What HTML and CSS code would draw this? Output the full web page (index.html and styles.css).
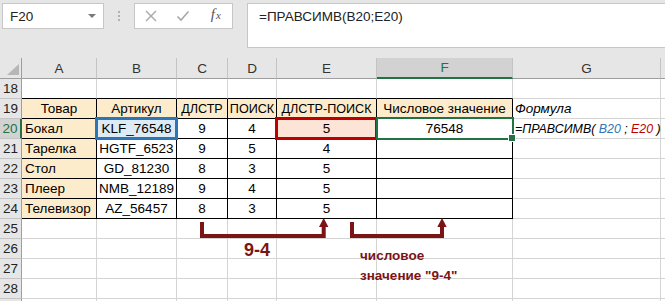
FILE: index.html
```html
<!DOCTYPE html>
<html lang="ru">
<head>
<meta charset="utf-8">
<title>ПРАВСИМВ</title>
<link rel="stylesheet" href="styles.css">
</head>
<body>
<div class="app">
  <div class="fbar">
    <div class="namebox"><span>F20</span><span class="caret"></span></div>
    <div class="grip"><i></i><i></i><i></i></div>
    <div class="btns">
      <span class="btn"><svg width="12" height="12" viewBox="0 0 12 12"><path d="M1 1L11 11M11 1L1 11" stroke="#a8a8a8" stroke-width="1.4" fill="none"/></svg></span>
      <span class="btn"><svg width="14" height="12" viewBox="0 0 14 12"><path d="M1.5 6.5L5 10L12.5 1.5" stroke="#a8a8a8" stroke-width="1.6" fill="none"/></svg></span>
      <span class="btn fx"><span class="f">f</span><span class="x">x</span></span>
    </div>
    <div class="formula">=ПРАВСИМВ(B20;E20)</div>
  </div>

  <div class="sheet">
    <div class="c corner"><span class="tri"></span></div>
    <div class="c ch">A</div><div class="c ch">B</div><div class="c ch">C</div><div class="c ch">D</div><div class="c ch">E</div><div class="c ch act">F</div><div class="c ch">G</div><div class="c ch"></div>

    <div class="c rh">18</div>
    <div class="c tb"></div><div class="c tb"></div><div class="c tb"></div><div class="c tb"></div><div class="c tb"></div><div class="c tb"></div><div class="c"></div><div class="c"></div>

    <div class="c rh">19</div>
    <div class="c t cream ctr">Товар</div><div class="c t cream ctr">Артикул</div><div class="c t cream ctr caps">ДЛСТР</div><div class="c t cream ctr caps">ПОИСК</div><div class="c t cream ctr caps">ДЛСТР-ПОИСК</div><div class="c t cream ctr">Числовое значение</div><div class="c it ov">Формула</div><div class="c"></div>

    <div class="c rh act">20</div>
    <div class="c t cream">Бокал</div><div class="c t ctr selb">KLF_76548</div><div class="c t ctr">9</div><div class="c t ctr">4</div><div class="c t ctr selr">5</div><div class="c t ctr active">76548</div><div class="c it ov fm"><span>=ПРАВСИМВ( <span class="blue">B20</span> ; <span class="red">E20</span> )</span></div><div class="c"></div>

    <div class="c rh">21</div>
    <div class="c t cream">Тарелка</div><div class="c t ctr">HGTF_6523</div><div class="c t ctr">9</div><div class="c t ctr">5</div><div class="c t ctr">4</div><div class="c t"></div><div class="c"></div><div class="c"></div>

    <div class="c rh">22</div>
    <div class="c t cream">Стол</div><div class="c t ctr">GD_81230</div><div class="c t ctr">8</div><div class="c t ctr">3</div><div class="c t ctr">5</div><div class="c t"></div><div class="c"></div><div class="c"></div>

    <div class="c rh">23</div>
    <div class="c t cream">Плеер</div><div class="c t ctr">NMB_12189</div><div class="c t ctr">9</div><div class="c t ctr">4</div><div class="c t ctr">5</div><div class="c t"></div><div class="c"></div><div class="c"></div>

    <div class="c rh">24</div>
    <div class="c t cream">Телевизор</div><div class="c t ctr">AZ_56457</div><div class="c t ctr">8</div><div class="c t ctr">3</div><div class="c t ctr">5</div><div class="c t"></div><div class="c"></div><div class="c"></div>

    <div class="c rh">25</div>
    <div class="c"></div><div class="c"></div><div class="c"></div><div class="c"></div><div class="c"></div><div class="c"></div><div class="c"></div><div class="c"></div>
    <div class="c rh">26</div>
    <div class="c"></div><div class="c"></div><div class="c"></div><div class="c"></div><div class="c"></div><div class="c"></div><div class="c"></div><div class="c"></div>
    <div class="c rh">27</div>
    <div class="c"></div><div class="c"></div><div class="c"></div><div class="c"></div><div class="c"></div><div class="c"></div><div class="c"></div><div class="c"></div>
    <div class="c rh">28</div>
    <div class="c"></div><div class="c"></div><div class="c"></div><div class="c"></div><div class="c"></div><div class="c"></div><div class="c"></div><div class="c"></div>
    <div class="c rh"></div>
    <div class="c"></div><div class="c"></div><div class="c"></div><div class="c"></div><div class="c"></div><div class="c"></div><div class="c"></div><div class="c"></div>
  </div>

  <svg class="annot" width="665" height="301" viewBox="0 0 665 301">
    <path d="M202 222V236H323.7V226" fill="none" stroke="#7c1416" stroke-width="4"/>
    <polygon points="319,227 328.4,227 323.7,218" fill="#7c1416"/>
    <path d="M352 222V236H442V226" fill="none" stroke="#7c1416" stroke-width="4"/>
    <polygon points="437.3,227 446.7,227 442,218" fill="#7c1416"/>
  </svg>
  <div class="note n1">9-4</div>
  <div class="note n2">числовое<br>значение "9-4"</div>
</div>
</body>
</html>
```
FILE: styles.css
```css
* { box-sizing: border-box; margin: 0; padding: 0; }
body {
  margin: 0;
  width: 665px;
  height: 301px;
  overflow: hidden;
  background: #fff;
  font-family: "Liberation Sans", Arial, sans-serif;
}
.app {
  position: relative;
  width: 665px;
  height: 301px;
  overflow: hidden;
  background: #fff;
}

/* formula bar */
.fbar {
  height: 58px;
  background: #e6e6e6;
  display: flex;
  align-items: flex-start;
  padding: 3px 0 0 2px;
}
.namebox {
  width: 102px;
  height: 26px;
  background: #fff;
  border: 1px solid #c6c6c6;
  display: flex;
  align-items: center;
  justify-content: space-between;
  padding: 0 7px 0 7px;
  font-size: 13.5px;
  color: #222;
}
.caret {
  width: 0;
  height: 0;
  border-left: 4px solid transparent;
  border-right: 4px solid transparent;
  border-top: 4px solid #7a7a7a;
}
.grip {
  width: 30px;
  height: 26px;
  display: flex;
  flex-direction: column;
  align-items: center;
  justify-content: center;
  gap: 2px;
}
.grip i {
  display: block;
  width: 2px;
  height: 2px;
  background: #b0b0b0;
}
.btns {
  width: 99px;
  height: 26px;
  background: #fff;
  border: 1px solid #c6c6c6;
  display: flex;
  align-items: center;
}
.btn {
  width: 36px;
  height: 24px;
  display: flex;
  align-items: center;
  justify-content: center;
}
.btn svg { display: block; }
.fx {
  font-family: "Liberation Serif", "Times New Roman", serif;
  font-style: italic;
  color: #555;
  align-items: baseline;
  padding-top: 2px;
}
.fx .f { font-size: 15px; }
.fx .x { font-size: 11px; margin-left: 1px; }
.formula {
  margin-left: 14px;
  flex: 1;
  height: 45px;
  background: #fff;
  border: 1px solid #c6c6c6;
  border-right: none;
  padding: 4px 11px;
  font-size: 13.5px;
  line-height: 18px;
  color: #222;
}

/* grid */
.sheet {
  display: grid;
  grid-template-columns: 22px 75px 80px 51px 49px 100px 136px 148px 10px;
  grid-template-rows: 21px;
  grid-auto-rows: 20px;
  background: #fff;
}
.c {
  border-right: 1px solid #d4d4d4;
  border-bottom: 1px solid #d4d4d4;
  font-size: 13.5px;
  display: flex;
  align-items: center;
  white-space: nowrap;
  overflow: hidden;
  padding: 0 3px;
  color: #000;
}
.ctr { justify-content: center; padding: 0 1px; }
.caps { font-size: 12.6px; }
.ov { overflow: visible; }
.corner {
  background: #e6e6e6;
  border-right-color: #9e9e9e;
  border-bottom-color: #9e9e9e;
  align-items: flex-end;
  justify-content: flex-end;
  padding: 0 2px 3px 0;
}
.tri {
  width: 0;
  height: 0;
  border-left: 12px solid transparent;
  border-bottom: 11px solid #b6b6b6;
}
.ch {
  background: #e6e6e6;
  border-right-color: #c4c4c4;
  border-bottom-color: #9e9e9e;
  justify-content: center;
  color: #333;
}
.ch.act {
  background: #d2d2d2;
  color: #217346;
  border-bottom: 2px solid #217346;
}
.rh {
  background: #e6e6e6;
  border-right-color: #9e9e9e;
  border-bottom-color: #c4c4c4;
  justify-content: center;
  color: #222;
  padding: 0;
}
.rh.act {
  background: #d2d2d2;
  color: #217346;
  border-right: 2px solid #217346;
}
.t { border-right-color: #000; border-bottom-color: #000; }
.tb { border-bottom-color: #000; }
.cream { background: #fdeccb; }
.it { font-style: italic; padding-left: 2px; }
.fm { font-size: 12.4px; }
.blue { color: #2e75b6; }
.red { color: #c00000; }

.selb, .selr, .active {
  position: relative;
  overflow: visible;
  z-index: 2;
}
.selb { background: #ddebf7; }
.selr { background: #fce4d6; }
.selb::after, .selr::after, .active::after {
  content: "";
  position: absolute;
  top: -2px;
  left: -2px;
  right: -2px;
  bottom: -2px;
  border: 3px solid #2e75b6;
}
.selr::after { border-color: #c00000; }
.active { z-index: 3; }
.active::after {
  border: 2px solid #217346;
  left: -1px;
  right: -2px;
}
.active::before {
  content: "";
  position: absolute;
  right: -4px;
  bottom: -4px;
  width: 6px;
  height: 6px;
  background: #217346;
  border: 1px solid #fff;
  z-index: 4;
}

/* annotations */
.annot {
  position: absolute;
  left: 0;
  top: 0;
  pointer-events: none;
  z-index: 10;
}
.note {
  position: absolute;
  color: #7c1416;
  font-weight: bold;
  z-index: 10;
}
.n1 {
  left: 244px;
  top: 241px;
  font-size: 18px;
  line-height: 18px;
}
.n2 {
  left: 360px;
  top: 246px;
  font-size: 13.5px;
  line-height: 20px;
}
```
